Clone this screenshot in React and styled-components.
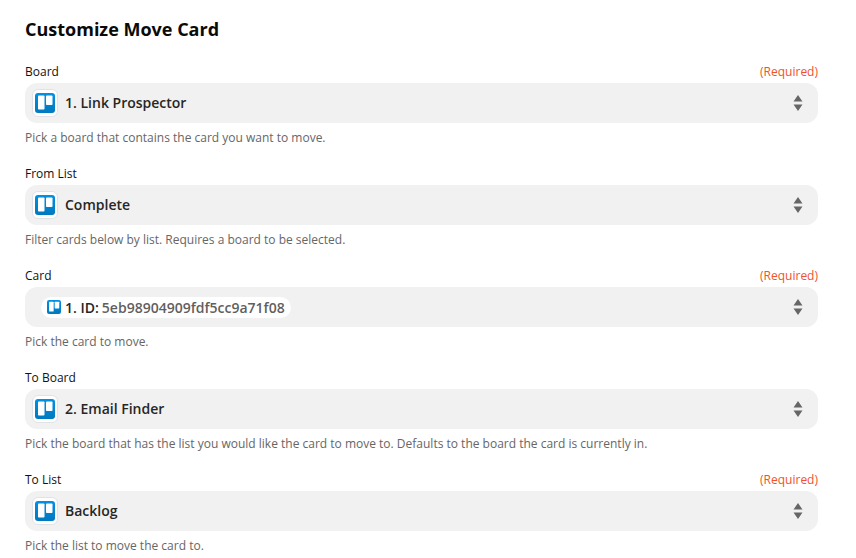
import styled, { createGlobalStyle } from 'styled-components';

const GlobalStyle = createGlobalStyle`
	html, body {
		margin: 0;
		padding: 0;
		background: #fff;
		font-family: "Open Sans", "Liberation Sans", sans-serif;
	}
`;

const Page = styled.div`
	box-sizing: border-box;
	width: 856px;
	height: 558px;
	overflow: hidden;
	padding: 17px 38px 0 25px;
`;

const Title = styled.h2`
	margin: 0 0 21px;
	height: 25px;
	font-size: 18px;
	line-height: 25px;
	font-weight: 700;
	color: #0a0a0a;
`;

const Field = styled.div`
	display: flex;
	flex-direction: column;
	height: 102px;
`;

const LabelRow = styled.div`
	display: flex;
	justify-content: space-between;
	align-items: center;
	height: 18px;
	margin-bottom: 2px;
	font-size: 12px;
	line-height: 18px;
`;

const Label = styled.span`
	font-weight: 500;
	color: #111;
`;

const Required = styled.span`
	color: #f0532a;
`;

const Select = styled.div`
	display: flex;
	align-items: center;
	height: 40px;
	padding: 0 15px 0 7px;
	border-radius: 12px;
	background: #f1f1f1;
`;

const AppBadge = styled.div`
	display: flex;
	align-items: center;
	justify-content: center;
	box-sizing: border-box;
	width: 26px;
	height: 28px;
	margin-right: 7px;
	border-radius: 6px;
	border: 1px solid #dfe3e8;
	background: #fff;
`;

const Value = styled.span`
	flex: 1;
	font-size: 14px;
	line-height: 20px;
	font-weight: 600;
	color: #262626;
`;

const PillSlot = styled.div`
	flex: 1;
	display: flex;
	padding-left: 9px;
`;

const Pill = styled.div`
	display: flex;
	align-items: center;
	gap: 4px;
	height: 21px;
	padding: 0 6px 0 6px;
	border-radius: 11px;
	background: #fff;
	font-size: 14px;
	font-weight: 600;
	color: #262626;
`;

const PillValue = styled.span`
	margin-left: -1px;
	color: #5f5f5f;
`;

const Hint = styled.p`
	margin: 6px 0 0;
	font-size: 12px;
	line-height: 17px;
	color: #666;
`;

const TrelloIcon = ({ id, size = 20 }) => (
	<svg width={size} height={size} viewBox="0 0 20 20">
		<defs>
			<linearGradient id={id} x1="0" y1="0" x2="0" y2="1">
				<stop offset="0" stopColor="#0091e6" />
				<stop offset="1" stopColor="#0079bf" />
			</linearGradient>
		</defs>
		<rect width="20" height="20" rx="3" fill={`url(#${id})`} />
		<rect x="3" y="2.5" width="6.5" height="14" rx="0.8" fill="#fff" />
		<rect x="11" y="2.5" width="6.5" height="9.5" rx="0.8" fill="#fff" />
	</svg>
);

const Sorter = () => (
	<svg width="10" height="16" viewBox="0 0 10 16">
		<path d="M5 0 L9.5 6.5 H0.5 Z" fill="#666" />
		<path d="M5 16 L0.5 9.5 H9.5 Z" fill="#666" />
	</svg>
);

const fields = [
	{ label: 'Board', required: true, value: '1. Link Prospector', hint: 'Pick a board that contains the card you want to move.' },
	{ label: 'From List', value: 'Complete', hint: 'Filter cards below by list. Requires a board to be selected.' },
	{ label: 'Card', required: true, pill: { name: '1. ID:', value: '5eb98904909fdf5cc9a71f08' }, hint: 'Pick the card to move.' },
	{ label: 'To Board', value: '2. Email Finder', hint: 'Pick the board that has the list you would like the card to move to. Defaults to the board the card is currently in.' },
	{ label: 'To List', required: true, value: 'Backlog', hint: 'Pick the list to move the card to.' },
];

export default function App() {
	return (
		<Page>
			<GlobalStyle />
			<Title>Customize Move Card</Title>
			{fields.map(({ label, required, value, pill, hint }) => (
				<Field key={label}>
					<LabelRow>
						<Label>{label}</Label>
						{required && <Required>(Required)</Required>}
					</LabelRow>
					<Select>
						{pill ? (
							<PillSlot>
								<Pill>
									<TrelloIcon id="trello-pill" size={14} />
									<span>{pill.name}</span>
									<PillValue>{pill.value}</PillValue>
								</Pill>
							</PillSlot>
						) : (
							<>
								<AppBadge>
									<TrelloIcon id={`trello-${label}`.replace(' ', '-')} />
								</AppBadge>
								<Value>{value}</Value>
							</>
						)}
						<Sorter />
					</Select>
					<Hint>{hint}</Hint>
				</Field>
			))}
		</Page>
	);
}
